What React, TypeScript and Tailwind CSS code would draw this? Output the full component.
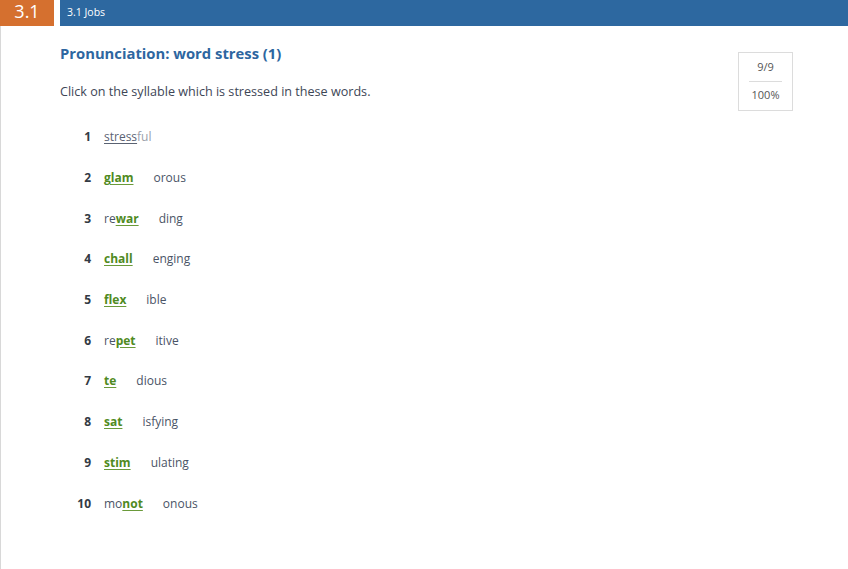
import React from 'react';

type Part = { text: string; kind: 'plain' | 'stress' | 'rest' };

const words: Part[][] = [
  [{ text: 'stress', kind: 'plain' }, { text: 'ful', kind: 'rest' }],
  [{ text: 'glam', kind: 'stress' }, { text: 'orous', kind: 'rest' }],
  [{ text: 're', kind: 'plain' }, { text: 'war', kind: 'stress' }, { text: 'ding', kind: 'rest' }],
  [{ text: 'chall', kind: 'stress' }, { text: 'enging', kind: 'rest' }],
  [{ text: 'flex', kind: 'stress' }, { text: 'ible', kind: 'rest' }],
  [{ text: 're', kind: 'plain' }, { text: 'pet', kind: 'stress' }, { text: 'itive', kind: 'rest' }],
  [{ text: 'te', kind: 'stress' }, { text: 'dious', kind: 'rest' }],
  [{ text: 'sat', kind: 'stress' }, { text: 'isfying', kind: 'rest' }],
  [{ text: 'stim', kind: 'stress' }, { text: 'ulating', kind: 'rest' }],
  [{ text: 'mo', kind: 'plain' }, { text: 'not', kind: 'stress' }, { text: 'onous', kind: 'rest' }],
];

const App: React.FC = () => {
  return (
    <div
      className="w-[848px] h-[569px] bg-white overflow-hidden"
      style={{ fontFamily: '"Open Sans", "Noto Sans", sans-serif' }}
    >
      <div className="flex h-[26px]">
        <div className="w-[54px] shrink-0 bg-[#d5702f] text-white text-[18px] leading-[20px] flex justify-center pt-[1px]">
          3.1
        </div>
        <div className="w-[6px] shrink-0" />
        <div className="flex-1 bg-[#2d68a0] text-white text-[10.5px] flex items-center pl-[7px]">
          3.1 Jobs
        </div>
      </div>

      <div className="border-l border-[#d8d8d8] h-[543px] pl-[59px] pr-[55px] flex">
        <div className="flex-1">
          <h1 className="text-[14.8px] font-bold text-[#2d66a0] mt-[16px] leading-[22px]">
            Pronunciation: word stress (1)
          </h1>
          <p className="text-[12.6px] text-[#3d4656] mt-[19px] leading-[18px]">
            Click on the syllable which is stressed in these words.
          </p>

          <div className="mt-[16px]">
            {words.map((parts, i) => (
              <div key={i} className="flex items-center h-[40.7px] text-[12px]">
                <span className="w-[31px] text-right font-bold text-[#333a44]">{i + 1}</span>
                <span className="ml-[13px] flex">
                  {parts.map((p, j) => {
                    if (p.kind === 'stress')
                      return (
                        <span
                          key={j}
                          className="font-bold text-[#4f8a22] underline underline-offset-2 decoration-[#6a9a3a]"
                        >
                          {p.text}
                        </span>
                      );
                    if (p.kind === 'rest')
                      return (
                        <span
                          key={j}
                          className={i === 0 ? 'text-[#9aa0aa]' : 'ml-[20px] text-[#4a5466]'}
                        >
                          {p.text}
                        </span>
                      );
                    return (
                      <span
                        key={j}
                        className={
                          i === 0
                            ? 'text-[#5a6272] underline underline-offset-2 decoration-[#5a6272]'
                            : 'text-[#4a5466]'
                        }
                      >
                        {p.text}
                      </span>
                    );
                  })}
                </span>
              </div>
            ))}
          </div>
        </div>

        <div className="mt-[26px] w-[55px] h-[59px] border border-[#dcdcdc] flex flex-col items-center text-[11px] text-[#555]">
          <div className="mt-[6px] leading-[16px]">9/9</div>
          <div className="w-[33px] border-t border-[#dcdcdc] mt-[6px]" />
          <div className="mt-[5px] leading-[16px]">100%</div>
        </div>
      </div>
    </div>
  );
};

export default App;
